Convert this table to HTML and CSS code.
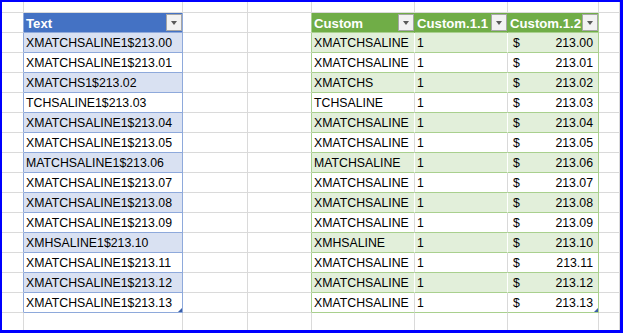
FILE: index.html
```html
<!DOCTYPE html>
<html>
<head>
<meta charset="utf-8">
<link rel="stylesheet" href="styles.css">
</head>
<body>
<div class="frame">
  <div class="sheet">
    <div class="row top">
      <div class="c"></div><div class="c"></div><div class="c"></div><div class="c"></div><div class="c"></div><div class="c"></div><div class="c"></div><div class="c"></div>
    </div>
    <div class="row">
      <div class="c ea"></div>
      <div class="c t bh"><span>Text</span><span class="dd"></span></div>
      <div class="c"></div><div class="c eg"></div>
      <div class="c g gh gi"><span>Custom</span><span class="dd"></span></div>
      <div class="c g gh gi"><span>Custom.1.1</span><span class="dd"></span></div>
      <div class="c g gh gr"><span>Custom.1.2</span><span class="dd"></span></div>
      <div class="c"></div>
    </div>
    <div class="row">
      <div class="c ea"></div><div class="c t bb">XMATCHSALINE1$213.00</div><div class="c"></div><div class="c eg"></div>
      <div class="c g gb gi">XMATCHSALINE</div><div class="c g gb gi">1</div><div class="c g gb gr cur"><span>$</span><span>213.00</span></div><div class="c"></div>
    </div>
    <div class="row">
      <div class="c ea"></div><div class="c t bw">XMATCHSALINE1$213.01</div><div class="c"></div><div class="c eg"></div>
      <div class="c g gw gi">XMATCHSALINE</div><div class="c g gw gi">1</div><div class="c g gw gr cur"><span>$</span><span>213.01</span></div><div class="c"></div>
    </div>
    <div class="row">
      <div class="c ea"></div><div class="c t bb">XMATCHS1$213.02</div><div class="c"></div><div class="c eg"></div>
      <div class="c g gb gi">XMATCHS</div><div class="c g gb gi">1</div><div class="c g gb gr cur"><span>$</span><span>213.02</span></div><div class="c"></div>
    </div>
    <div class="row">
      <div class="c ea"></div><div class="c t bw">TCHSALINE1$213.03</div><div class="c"></div><div class="c eg"></div>
      <div class="c g gw gi">TCHSALINE</div><div class="c g gw gi">1</div><div class="c g gw gr cur"><span>$</span><span>213.03</span></div><div class="c"></div>
    </div>
    <div class="row">
      <div class="c ea"></div><div class="c t bb">XMATCHSALINE1$213.04</div><div class="c"></div><div class="c eg"></div>
      <div class="c g gb gi">XMATCHSALINE</div><div class="c g gb gi">1</div><div class="c g gb gr cur"><span>$</span><span>213.04</span></div><div class="c"></div>
    </div>
    <div class="row">
      <div class="c ea"></div><div class="c t bw">XMATCHSALINE1$213.05</div><div class="c"></div><div class="c eg"></div>
      <div class="c g gw gi">XMATCHSALINE</div><div class="c g gw gi">1</div><div class="c g gw gr cur"><span>$</span><span>213.05</span></div><div class="c"></div>
    </div>
    <div class="row">
      <div class="c ea"></div><div class="c t bb">MATCHSALINE1$213.06</div><div class="c"></div><div class="c eg"></div>
      <div class="c g gb gi">MATCHSALINE</div><div class="c g gb gi">1</div><div class="c g gb gr cur"><span>$</span><span>213.06</span></div><div class="c"></div>
    </div>
    <div class="row">
      <div class="c ea"></div><div class="c t bw">XMATCHSALINE1$213.07</div><div class="c"></div><div class="c eg"></div>
      <div class="c g gw gi">XMATCHSALINE</div><div class="c g gw gi">1</div><div class="c g gw gr cur"><span>$</span><span>213.07</span></div><div class="c"></div>
    </div>
    <div class="row">
      <div class="c ea"></div><div class="c t bb">XMATCHSALINE1$213.08</div><div class="c"></div><div class="c eg"></div>
      <div class="c g gb gi">XMATCHSALINE</div><div class="c g gb gi">1</div><div class="c g gb gr cur"><span>$</span><span>213.08</span></div><div class="c"></div>
    </div>
    <div class="row">
      <div class="c ea"></div><div class="c t bw">XMATCHSALINE1$213.09</div><div class="c"></div><div class="c eg"></div>
      <div class="c g gw gi">XMATCHSALINE</div><div class="c g gw gi">1</div><div class="c g gw gr cur"><span>$</span><span>213.09</span></div><div class="c"></div>
    </div>
    <div class="row">
      <div class="c ea"></div><div class="c t bb">XMHSALINE1$213.10</div><div class="c"></div><div class="c eg"></div>
      <div class="c g gb gi">XMHSALINE</div><div class="c g gb gi">1</div><div class="c g gb gr cur"><span>$</span><span>213.10</span></div><div class="c"></div>
    </div>
    <div class="row">
      <div class="c ea"></div><div class="c t bw">XMATCHSALINE1$213.11</div><div class="c"></div><div class="c eg"></div>
      <div class="c g gw gi">XMATCHSALINE</div><div class="c g gw gi">1</div><div class="c g gw gr cur"><span>$</span><span>213.11</span></div><div class="c"></div>
    </div>
    <div class="row">
      <div class="c ea"></div><div class="c t bb">XMATCHSALINE1$213.12</div><div class="c"></div><div class="c eg"></div>
      <div class="c g gb gi">XMATCHSALINE</div><div class="c g gb gi">1</div><div class="c g gb gr cur"><span>$</span><span>213.12</span></div><div class="c"></div>
    </div>
    <div class="row">
      <div class="c ea"></div><div class="c t bw handle">XMATCHSALINE1$213.13</div><div class="c"></div><div class="c eg"></div>
      <div class="c g gw gi">XMATCHSALINE</div><div class="c g gw gi">1</div><div class="c g gw gr cur handle"><span>$</span><span>213.13</span></div><div class="c"></div>
    </div>
    <div class="row last">
      <div class="c"></div><div class="c"></div><div class="c"></div><div class="c"></div><div class="c"></div><div class="c"></div><div class="c"></div><div class="c"></div>
    </div>
  </div>
</div>
</body>
</html>
```

FILE: styles.css
```css
html, body {
  margin: 0;
  padding: 0;
  background: #ffffff;
}

.frame {
  width: 623px;
  height: 333px;
  box-sizing: border-box;
  border-style: solid;
  border-color: #0000ff;
  border-width: 2px 3px 3px 2px;
  overflow: hidden;
  font-family: "Liberation Sans", Arial, sans-serif;
  font-size: 12.3px;
  color: #000000;
}

.sheet {
  display: flex;
  flex-direction: column;
  height: 100%;
}

.row {
  display: grid;
  grid-template-columns: 22px 159px 65px 64px 103px 93px 91px 1fr;
  height: 20px;
  flex: none;
}

.row.top {
  height: 11px;
}

.row.last {
  flex: 1;
}

.row.last .c {
  border-bottom: none;
}

.c {
  box-sizing: border-box;
  border-right: 1px solid #dadada;
  border-bottom: 1px solid #dadada;
  overflow: hidden;
  white-space: nowrap;
  padding: 2px 0 0 2px;
  line-height: 17px;
  position: relative;
}

/* blue table */
.ea {
  border-right-color: #8ea9db;
}

.t {
  border-right-color: #8ea9db;
  border-bottom-color: #8ea9db;
}

.bh {
  background: #4472c4;
}

.bb {
  background: #d9e1f2;
}

.bw {
  background: #ffffff;
}

/* green table */
.eg {
  border-right-color: #a9d08e;
}

.g {
  border-bottom-color: #a9d08e;
}

.gr {
  border-right-color: #a9d08e;
}

.gi {
  border-right-color: #d9d9d9;
}

.gh {
  background: #70ad47;
}

.gh.gi {
  border-right-color: #70ad47;
}

.gb {
  background: #e2efda;
}

.gb.gi {
  border-right-color: #ffffff;
}

.gw {
  background: #ffffff;
}

/* header cells */
.bh, .gh {
  display: flex;
  justify-content: space-between;
  color: #ffffff;
  font-weight: bold;
  font-size: 13.2px;
  padding-right: 0;
}

.dd {
  flex: none;
  width: 16px;
  height: 17px;
  box-sizing: border-box;
  margin-top: -1px;
  border: 1px solid #a6a6a6;
  background: #f2f2f2;
  position: relative;
}

.dd::after {
  content: "";
  position: absolute;
  left: 4px;
  top: 6px;
  width: 0;
  height: 0;
  border-left: 3.5px solid transparent;
  border-right: 3.5px solid transparent;
  border-top: 4px solid #595959;
}

/* currency */
.cur {
  display: flex;
  justify-content: space-between;
  padding-left: 5px;
  padding-right: 5px;
}

.handle::after {
  content: "";
  position: absolute;
  right: 0;
  bottom: 0;
  width: 0;
  height: 0;
  border-left: 4px solid transparent;
  border-bottom: 4px solid #3a5fa8;
}
```
